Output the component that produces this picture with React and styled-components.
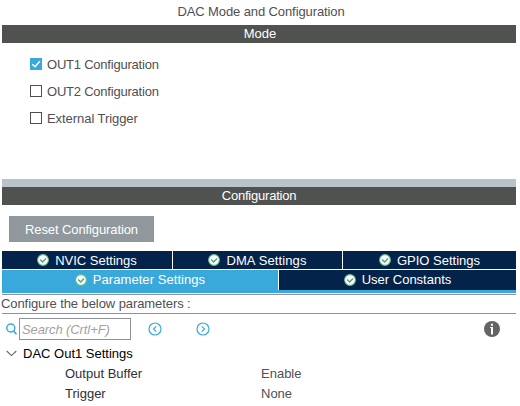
import React from 'react';
import styled, { createGlobalStyle } from 'styled-components';

const Global = createGlobalStyle`
  * { box-sizing: border-box; }
  body { margin: 0; background: #fff; font-family: "Liberation Sans", Arial, sans-serif; font-size: 13px; color: #505052; }
  svg { display: block; flex: none; }
`;
const Page = styled.main`width: 516px; height: 406px; padding-left: 2px; display: flex; flex-direction: column; overflow: hidden;`;
const Title = styled.h1`margin: 0; height: 25px; padding-left: 4px; font-size: 13px; font-weight: 400; line-height: 24px; text-align: center; white-space: nowrap; letter-spacing: -0.1px;`;
const SectionBar = styled.h2`margin: 0; height: 18px; flex: none; padding-left: ${p => p.$shift || 0}px; background: #505250; color: #fff; font-size: 13px; font-weight: 400; line-height: 18px; text-align: center; letter-spacing: ${p => p.$ls || 0}px;`;
const ModePanel = styled.section`height: 136px; flex: none; padding: 8px 0 0 28px;`;
const CheckRow = styled.label`height: 26px; margin-bottom: 1px; display: flex; align-items: center; gap: 5px;`;
const Label = styled.span`white-space: nowrap; letter-spacing: ${p => p.$ls}px;`;
const Box = styled.span`width: 12px; height: 12px; border: 1px solid ${p => (p.$on ? '#39a9dc' : '#505050')}; background: ${p => (p.$on ? '#39a9dc' : '#fff')}; display: grid; place-items: center;`;
const Splitter = styled.div`height: 8px; flex: none; background: #b8c4ca;`;
const Actions = styled.div`height: 46px; flex: none; padding: 11px 0 0 7px;`;
const ResetButton = styled.button`width: 145px; height: 26px; padding: 0; border: 0; background: #90989e; color: #fff; font: 13px "Liberation Sans", sans-serif; letter-spacing: -0.1px;`;
const TabRow = styled.div`display: grid; grid-template-columns: ${p => p.$cols}; column-gap: 1px; height: ${p => p.$h}px; flex: none; margin-bottom: 1px; background: #fff;`;
const Tab = styled.button`
  display: flex; align-items: center; justify-content: center; gap: 6px; padding: 0 0 ${p => p.$lift || 0}px;
  border: 0; background: ${p => (p.$active ? '#39a9dc' : '#03234b')};
  color: #fff; font: 13px "Liberation Sans", sans-serif; letter-spacing: ${p => p.$ls || 0}px; white-space: nowrap;
`;
const TabUnderline = styled.div`height: 3px; flex: none; margin-top: -1px; background: #39a9dc;`;
const Hint = styled.p`height: 20px; flex: none; margin: 1px 0 0; border: solid #909295; border-width: 1px 0; line-height: 18px; text-indent: -1px; letter-spacing: -0.08px; white-space: nowrap;`;
const SearchRow = styled.div`height: 30px; flex: none; display: flex; align-items: center; padding-left: 4px;`;
const SearchInput = styled.input`width: 112px; height: 22px; margin: 0 17px 0 2px; border: 1px solid #8c9298; padding: 0 2px; font: italic 13px "Liberation Sans", sans-serif; letter-spacing: -0.1px; outline: 0; &::placeholder { color: #a2a2a2; opacity: 1; }`;
const IconButton = styled.button`width: 14px; height: 14px; border: 0; padding: 0; background: none; margin-right: ${p => p.$gap}px;`;
const GroupRow = styled.div`height: 18px; flex: none; margin-bottom: 1px; display: flex; align-items: center; gap: 6px; padding-left: 4px; color: #000;`;
const ParamRow = styled.div`height: 20px; flex: none; display: grid; grid-template-columns: 196px 1fr; align-items: center; padding-left: 63px;`;
const ParamName = styled.span`color: #303030;`;
const ParamValue = styled.span`color: #505052;`;

const Tick = () => (
  <svg width="10" height="10" viewBox="0 0 10 10"><path d="M1.3 5.2 4 7.7 8.8 2.2" fill="none" stroke="#fff" strokeWidth="1.5" /></svg>
);
const StatusIcon = () => (
  <svg width="12" height="12" viewBox="0 0 12 12">
    <circle cx="6" cy="6" r="5.4" fill="#fff" stroke="#62bb87" strokeWidth="1.1" />
    <path d="M3.2 5.5 5.6 7.9 9 4.5" fill="none" stroke="#45aa70" strokeWidth="1.4" />
  </svg>
);
const Arrow = ({ next }) => (
  <svg width="14" height="14" viewBox="0 0 14 14" fill="none" stroke="#39a9dc" strokeWidth="1.2">
    <circle cx="7" cy="7" r="6" /><path d={next ? 'M5.8 4.3 8.5 7 5.8 9.7' : 'M8.2 4.3 5.5 7 8.2 9.7'} />
  </svg>
);
const SearchIcon = () => (
  <svg width="11" height="12" viewBox="0 0 11 12" fill="none" stroke="#39a9dc"><circle cx="4.8" cy="5" r="4" strokeWidth="1.5" /><path d="m7.5 8 3 3.2" strokeWidth="1.8" /></svg>
);
const Chevron = () => (
  <svg width="11" height="7" viewBox="0 0 11 7"><path d="m.7 1 4.8 4.6L10.3 1" fill="none" stroke="#666" strokeWidth="1.1" /></svg>
);
const InfoIcon = () => (
  <svg width="16" height="16" viewBox="0 0 16 16"><circle cx="8" cy="8" r="8" fill="#646464" /><path d="M6.9 2.8h2.1v1.9H6.9zM6.2 6h2.8v7.4H7V6.9h-.8z" fill="#fff" /></svg>
);

const modes = [['OUT1 Configuration', true, -0.22], ['OUT2 Configuration', false, -0.22], ['External Trigger', false, -0.06]];
const params = [['Output Buffer', 'Enable'], ['Trigger', 'None']];

export default function App() {
  return (
    <>
      <Global />
      <Page>
        <Title>DAC Mode and Configuration</Title>
        <SectionBar $shift={2}>Mode</SectionBar>
        <ModePanel>
          {modes.map(([name, on, ls]) => (
            <CheckRow key={name}><Box $on={on}>{on && <Tick />}</Box><Label $ls={ls}>{name}</Label></CheckRow>
          ))}
        </ModePanel>
        <Splitter />
        <SectionBar $ls={-0.22}>Configuration</SectionBar>
        <Actions><ResetButton>Reset Configuration</ResetButton></Actions>
        <TabRow $cols="170px 169px 1fr" $h={18}>
          <Tab><StatusIcon />NVIC Settings</Tab>
          <Tab $ls={0.12}><StatusIcon />DMA Settings</Tab>
          <Tab><StatusIcon />GPIO Settings</Tab>
        </TabRow>
        <TabRow $cols="276px 1fr" $h={20}>
          <Tab $active $lift={1} $ls={0.06}><StatusIcon />Parameter Settings</Tab>
          <Tab $lift={1}><StatusIcon />User Constants</Tab>
        </TabRow>
        <TabUnderline />
        <Hint>Configure the below parameters :</Hint>
        <SearchRow>
          <SearchIcon /><SearchInput placeholder="Search (Crtl+F)" />
          <IconButton $gap={34}><Arrow /></IconButton>
          <IconButton $gap={274}><Arrow next /></IconButton>
          <InfoIcon />
        </SearchRow>
        <GroupRow><Chevron />DAC Out1 Settings</GroupRow>
        {params.map(([name, value]) => (
          <ParamRow key={name}><ParamName>{name}</ParamName><ParamValue>{value}</ParamValue></ParamRow>
        ))}
      </Page>
    </>
  );
}
